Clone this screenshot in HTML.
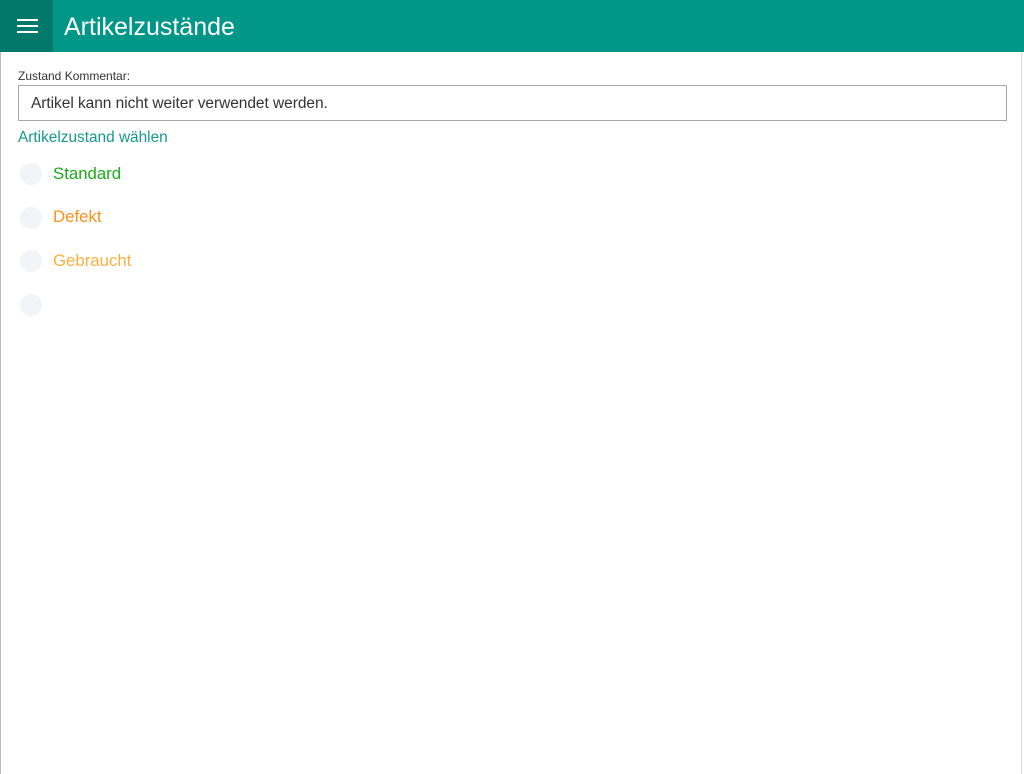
<!DOCTYPE html>
<html><head><meta charset="utf-8"><style>
html,body{margin:0;padding:0;width:1024px;height:774px;background:#fff;overflow:hidden;font-family:"Liberation Sans",sans-serif;}
.page{position:absolute;left:0;top:0;width:1022px;height:774px;border-left:1px solid #bbb;border-right:1px solid #ddd;box-sizing:border-box;}
.hdr{position:absolute;left:0;top:0;width:1024px;height:52px;background:#009688;}
.menu{position:absolute;left:0;top:0;width:53px;height:52px;background:#00796b;}
.menu i{position:absolute;left:17px;width:21px;height:2px;background:#fff;}
.title{position:absolute;left:64px;top:13px;color:#fff;font-size:25px;letter-spacing:0px;}
.lbl{position:absolute;left:18px;top:69px;font-size:12px;color:#333;}
.inp{position:absolute;left:18px;top:85px;width:989px;height:36px;border:1px solid #a8a8a8;box-sizing:border-box;}
.inp span{position:absolute;left:12px;top:9px;font-size:15.5px;color:#333;letter-spacing:-0.05px;}
.sel{position:absolute;left:18px;top:129px;font-size:15.4px;color:#16998d;}
.r{position:absolute;left:20px;width:22px;height:22px;border-radius:50%;background:#f3f4f8;}
.t{position:absolute;left:53px;font-size:16.8px;}
</style></head><body>
<div class="page"></div>
<div class="hdr"><div class="menu"><i style="top:19px"></i><i style="top:25px"></i><i style="top:31px"></i></div>
<div class="title">Artikelzustände</div></div>
<div class="lbl">Zustand Kommentar:</div>
<div class="inp"><span>Artikel kann nicht weiter verwendet werden.</span></div>
<div class="sel">Artikelzustand wählen</div>
<div class="r" style="top:163px"></div><div class="t" style="top:164px;color:#1aaa1a">Standard</div>
<div class="r" style="top:207px"></div><div class="t" style="top:207px;color:#f7931e">Defekt</div>
<div class="r" style="top:250px"></div><div class="t" style="top:251px;color:#fdb042">Gebraucht</div>
<div class="r" style="top:294px"></div>
</body></html>
